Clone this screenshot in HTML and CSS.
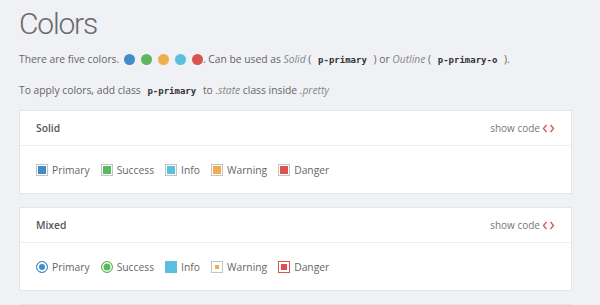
FILE: index.html
```html
<!DOCTYPE html>
<html>
<head>
    <title>Colors</title>
    <link rel="stylesheet" href="styles.css">
</head>
<body>
    <h1>Colors</h1>

    <p class="intro">There are five colors.
        <span class="dots">
            <span class="dot primary"></span>
            <span class="dot success"></span>
            <span class="dot warning"></span>
            <span class="dot info"></span>
            <span class="dot danger"></span>
        </span>. Can be used as <em>Solid</em> ( <code>p-primary</code> ) or <em>Outline</em> ( <code>p-primary-o</code> ).
    </p>

    <p class="intro last">To apply colors, add class <code>p-primary</code> to <em>.state</em> class inside <em>.pretty</em></p>

    <div class="card">
        <div class="card-header">
            <span class="title">Solid</span>
            <span class="show-code">show code
                <svg class="code-icon" width="13" height="9" viewBox="0 0 13 9"><path d="M4.5 1 L1.5 4.5 L4.5 8 M8.5 1 L11.5 4.5 L8.5 8" fill="none" stroke="#e0575a" stroke-width="1.4"/></svg>
            </span>
        </div>
        <div class="card-body">
            <label class="check"><span class="box solid primary"></span>Primary</label>
            <label class="check"><span class="box solid success"></span>Success</label>
            <label class="check"><span class="box solid info"></span>Info</label>
            <label class="check"><span class="box solid warning"></span>Warning</label>
            <label class="check"><span class="box solid danger"></span>Danger</label>
        </div>
    </div>

    <div class="card">
        <div class="card-header">
            <span class="title">Mixed</span>
            <span class="show-code">show code
                <svg class="code-icon" width="13" height="9" viewBox="0 0 13 9"><path d="M4.5 1 L1.5 4.5 L4.5 8 M8.5 1 L11.5 4.5 L8.5 8" fill="none" stroke="#e0575a" stroke-width="1.4"/></svg>
            </span>
        </div>
        <div class="card-body">
            <label class="check"><span class="radio outline primary"></span>Primary</label>
            <label class="check"><span class="radio fill success"></span>Success</label>
            <label class="check"><span class="box full info"></span>Info</label>
            <label class="check"><span class="box dotted warning"></span>Warning</label>
            <label class="check"><span class="box outline danger"></span>Danger</label>
        </div>
    </div>

    <div class="card"></div>
</body>
</html>
```

FILE: styles.css
```css
body {
    margin: 0;
    padding: 0 28px 0 19px;
    background-color: #eff1f4;
    font-family: "Open Sans", Arial, sans-serif;
    font-size: 10.3px;
    color: #666;
}
h1 {
    margin: 4px 0 7px;
    font-family: Roboto, "Open Sans", sans-serif;
    font-size: 30px;
    font-weight: 300;
    letter-spacing: -1.2px;
    color: #6a6a6a;
    line-height: 40px;
}
.intro {
    margin: 0 0 14px;
    line-height: 16px;
}
.intro.last {
    margin-bottom: 11px;
}
em {
    color: #888;
}
code {
    font-family: "DejaVu Sans Mono", monospace;
    font-weight: bold;
    font-size: 9px;
    color: #333;
    padding: 0 4px;
}
.dots {
    display: inline-flex;
    gap: 6px;
    vertical-align: -2px;
    margin-left: 2px;
}
.dot {
    width: 11px;
    height: 11px;
    border-radius: 50%;
}
.dot.primary { background-color: #428bca; }
.dot.success { background-color: #5cb85c; }
.dot.warning { background-color: #f0ad4e; }
.dot.info { background-color: #5bc0de; }
.dot.danger { background-color: #d9534f; }

.card {
    background-color: white;
    border: 1px solid #e3e5e8;
    margin-bottom: 13px;
}
.card-header {
    display: flex;
    justify-content: space-between;
    align-items: center;
    height: 34px;
    padding: 0 16px;
    border-bottom: 1px solid #f0f0f0;
}
.title {
    font-weight: 600;
    color: #555;
}
.show-code {
    display: flex;
    align-items: center;
    gap: 2px;
    font-size: 10px;
    color: #777;
}
.card-body {
    display: flex;
    align-items: center;
    gap: 11px;
    height: 47px;
    padding: 0 16px;
}
.check {
    display: flex;
    align-items: center;
    gap: 4px;
    font-size: 10.3px;
}
.box, .radio {
    width: 12px;
    height: 12px;
    box-sizing: border-box;
    border: 1px solid #bbb;
}
.radio {
    border-radius: 50%;
}
.box.solid { border-color: #c4c4c4; box-shadow: inset 0 0 0 1px white; }
.box.solid.primary { background-color: #428bca; }
.box.solid.success { background-color: #5cb85c; }
.box.solid.info { background-color: #5bc0de; }
.box.solid.warning { background-color: #f0ad4e; }
.box.solid.danger { background-color: #d9534f; }

.radio.outline.primary {
    border: 1px solid #428bca;
    background-color: #428bca;
    box-shadow: inset 0 0 0 2px white;
}
.radio.fill.success {
    border: 1px solid #5cb85c;
    background-color: #5cb85c;
    box-shadow: inset 0 0 0 1.5px white;
}
.box.full.info {
    border: none;
    background-color: #5bc0de;
}
.box.dotted.warning {
    border-color: #c4c4c4;
    background-color: #f0ad4e;
    box-shadow: inset 0 0 0 3px white;
}
.box.outline.danger {
    border: 1px solid #d9534f;
    background-color: #d9534f;
    box-shadow: inset 0 0 0 2px white;
}
```
